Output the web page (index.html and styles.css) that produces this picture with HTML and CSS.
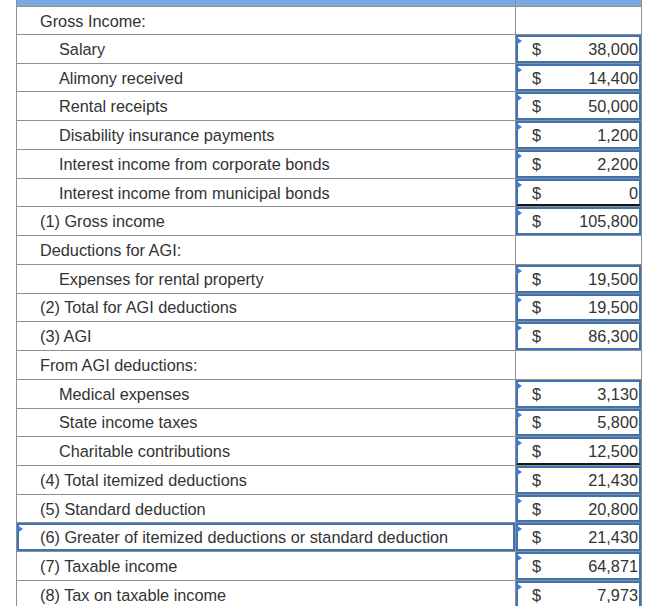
FILE: index.html
```html
<!DOCTYPE html>
<html lang="en">
<head>
<meta charset="utf-8">
<title>Taxable income worksheet</title>
<link rel="stylesheet" href="styles.css">
</head>
<body>
<div class="sheet">
  <div class="row head"><div class="label"></div><div class="cell"></div></div>
  <div class="row first"><div class="label">Gross Income:</div><div class="cell"></div></div>
  <div class="row"><div class="label ind">Salary</div><div class="cell"><div class="amt"><span>$</span><span>38,000</span></div></div></div>
  <div class="row"><div class="label ind">Alimony received</div><div class="cell"><div class="amt"><span>$</span><span>14,400</span></div></div></div>
  <div class="row"><div class="label ind">Rental receipts</div><div class="cell"><div class="amt"><span>$</span><span>50,000</span></div></div></div>
  <div class="row"><div class="label ind">Disability insurance payments</div><div class="cell"><div class="amt"><span>$</span><span>1,200</span></div></div></div>
  <div class="row"><div class="label ind">Interest income from corporate bonds</div><div class="cell"><div class="amt"><span>$</span><span>2,200</span></div></div></div>
  <div class="row"><div class="label ind">Interest income from municipal bonds</div><div class="cell"><div class="amt sum"><span>$</span><span>0</span></div></div></div>
  <div class="row"><div class="label">(1) Gross income</div><div class="cell"><div class="amt"><span>$</span><span>105,800</span></div></div></div>
  <div class="row"><div class="label">Deductions for AGI:</div><div class="cell"></div></div>
  <div class="row"><div class="label ind">Expenses for rental property</div><div class="cell"><div class="amt"><span>$</span><span>19,500</span></div></div></div>
  <div class="row"><div class="label">(2) Total for AGI deductions</div><div class="cell"><div class="amt"><span>$</span><span>19,500</span></div></div></div>
  <div class="row"><div class="label">(3) AGI</div><div class="cell"><div class="amt"><span>$</span><span>86,300</span></div></div></div>
  <div class="row"><div class="label">From AGI deductions:</div><div class="cell"></div></div>
  <div class="row"><div class="label ind">Medical expenses</div><div class="cell"><div class="amt"><span>$</span><span>3,130</span></div></div></div>
  <div class="row"><div class="label ind">State income taxes</div><div class="cell"><div class="amt"><span>$</span><span>5,800</span></div></div></div>
  <div class="row"><div class="label ind">Charitable contributions</div><div class="cell"><div class="amt sum"><span>$</span><span>12,500</span></div></div></div>
  <div class="row"><div class="label">(4) Total itemized deductions</div><div class="cell"><div class="amt"><span>$</span><span>21,430</span></div></div></div>
  <div class="row"><div class="label">(5) Standard deduction</div><div class="cell"><div class="amt"><span>$</span><span>20,800</span></div></div></div>
  <div class="row"><div class="label boxed"><div class="labelbox">(6) Greater of itemized deductions or standard deduction</div></div><div class="cell"><div class="amt"><span>$</span><span>21,430</span></div></div></div>
  <div class="row"><div class="label">(7) Taxable income</div><div class="cell"><div class="amt"><span>$</span><span>64,871</span></div></div></div>
  <div class="row"><div class="label">(8) Tax on taxable income</div><div class="cell"><div class="amt"><span>$</span><span>7,973</span></div></div></div>
</div>
</body>
</html>
```

FILE: styles.css
```css
html, body {
  margin: 0;
  padding: 0;
  background: #ffffff;
}

body {
  font-family: "Liberation Sans", Arial, sans-serif;
  font-size: 16.3px;
  color: #333333;
  overflow: hidden;
}

.sheet {
  margin-left: 16px;
  width: 626px;
  box-sizing: border-box;
  border-left: 1px solid #8f8f8f;
  border-right: 1px solid #8f8f8f;
}

.row {
  display: flex;
  box-sizing: border-box;
  height: 28.74px;
  border-bottom: 1px solid #8f8f8f;
}

.row.head {
  height: 7px;
  background: #7aaae2;
}

.row.first {
  height: 28px;
}

.label {
  width: 499px;
  flex: none;
  box-sizing: border-box;
  border-right: 1px solid #8f8f8f;
  padding: 1px 0 0 23px;
  display: flex;
  align-items: center;
  white-space: nowrap;
}

.label.ind {
  padding-left: 42px;
}

.label.boxed {
  padding: 0;
  align-items: stretch;
}

.labelbox {
  position: relative;
  flex: 1;
  box-sizing: border-box;
  border: 2px solid #3d72b6;
  padding: 1px 0 0 21px;
  display: flex;
  align-items: center;
}

.cell {
  flex: 1;
  display: flex;
  align-items: stretch;
}

.amt {
  position: relative;
  flex: 1;
  box-sizing: border-box;
  border: 2px solid #3d72b6;
  padding: 1px 1px 0 14px;
  display: flex;
  align-items: center;
  justify-content: space-between;
}

.amt.sum {
  border-bottom-color: #161616;
}

.amt::before,
.labelbox::before {
  content: "";
  position: absolute;
  left: -2px;
  top: 0;
  width: 0;
  height: 0;
  border-left: 6px solid #3b7bd4;
  border-top: 4px solid transparent;
  border-bottom: 4px solid transparent;
}
```
